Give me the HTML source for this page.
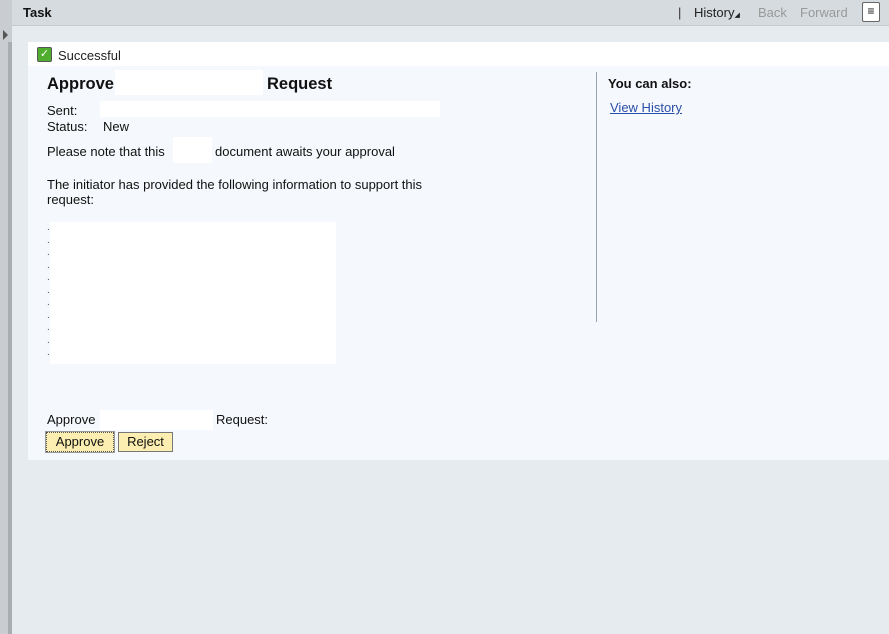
<!DOCTYPE html>
<html><head><style>
body{margin:0;width:889px;height:634px;overflow:hidden;background:#e6ebf0;font-family:"Liberation Sans",Arial,sans-serif;font-size:13px;color:#111;position:relative}
.a{position:absolute}
.w{position:absolute;background:#fff}
</style></head><body>
<div class="a" style="left:0;top:0;width:12px;height:634px;background:#c9cdd1"></div>
<div class="a" style="left:8px;top:42px;width:4px;height:592px;background:#a9adb1"></div>
<div class="a" style="left:3px;top:30px;width:0;height:0;border-left:5px solid #555;border-top:5px solid transparent;border-bottom:5px solid transparent"></div>
<div class="a" style="left:12px;top:0;width:877px;height:25px;background:#d6dbdf;border-bottom:1px solid #c5cacf"></div>
<div class="a" style="left:23px;top:5px;font-weight:bold;font-size:13px">Task</div>
<div class="a" style="left:678px;top:5px;color:#333">|</div>
<div class="a" style="left:694px;top:5px;color:#222">History<span style="font-size:7px">◢</span></div>
<div class="a" style="left:758px;top:5px;color:#999">Back</div>
<div class="a" style="left:800px;top:5px;color:#999">Forward</div>
<div class="a" style="left:862px;top:2px;width:16px;height:18px;background:#fff;border:1px solid #666;border-radius:2px;font-size:12px;line-height:16px;text-align:center">≡</div>
<div class="a" style="left:28px;top:42px;width:861px;height:24px;background:#fff"></div>
<div class="a" style="left:28px;top:66px;width:861px;height:394px;background:#f5f8fc"></div>
<div class="a" style="left:37px;top:47px;width:13px;height:13px;background:#4fae2d;border:1px solid #555;border-radius:2px;color:#fff;font-size:11px;line-height:13px;text-align:center">✓</div>
<div class="a" style="left:58px;top:48px;color:#222">Successful</div>
<div class="a" style="left:47px;top:75px;font-weight:bold;font-size:16.5px">Approve</div>
<div class="w" style="left:115px;top:70px;width:148px;height:25px"></div>
<div class="a" style="left:267px;top:75px;font-weight:bold;font-size:16.5px">Request</div>
<div class="a" style="left:47px;top:103px">Sent:</div>
<div class="w" style="left:100px;top:101px;width:340px;height:16px"></div>
<div class="a" style="left:47px;top:119px">Status:</div>
<div class="a" style="left:103px;top:119px">New</div>
<div class="a" style="left:47px;top:144px">Please note that this</div>
<div class="w" style="left:173px;top:137px;width:39px;height:26px"></div>
<div class="a" style="left:215px;top:144px">document awaits your approval</div>
<div class="a" style="left:47px;top:177px;line-height:15px">The initiator has provided the following information to support this<br>request:</div>
<div class="a" style="left:47px;top:222px;font-size:10px;line-height:12.5px;color:#555">.<br>.<br>.<br>.<br>.<br>.<br>.<br>.<br>.<br>.<br>.</div>
<div class="w" style="left:50px;top:222px;width:286px;height:142px"></div>
<div class="a" style="left:47px;top:412px">Approve</div>
<div class="w" style="left:100px;top:410px;width:113px;height:20px"></div>
<div class="a" style="left:216px;top:412px">Request:</div>
<div class="a" style="left:46px;top:432px;width:66px;height:18px;background:#fbeeb0;border:1px dotted #555;outline:1px solid #999;text-align:center;line-height:18px">Approve</div>
<div class="a" style="left:118px;top:432px;width:53px;height:18px;background:#fbeeb0;border:1px solid #777;text-align:center;line-height:18px">Reject</div>
<div class="a" style="left:596px;top:72px;width:1px;height:250px;background:#9aa4ae"></div>
<div class="a" style="left:608px;top:76px;font-weight:bold">You can also:</div>
<div class="a" style="left:610px;top:100px;color:#2a4fa8;text-decoration:underline">View History</div>
</body></html>
